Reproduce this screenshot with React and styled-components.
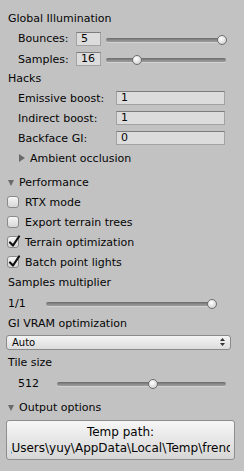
import React from "react";
import styled, { createGlobalStyle } from "styled-components";

const Global = createGlobalStyle`
  html, body { margin: 0; padding: 0; background: #c2c2c2; }
  body { font-family: "DejaVu Sans", "Liberation Sans", sans-serif; font-size: 11px; color: #050505; }
`;

const Panel = styled.div`
  width: 244px;
  height: 471px;
  box-sizing: border-box;
  padding-top: 8px;
  display: flex;
  flex-direction: column;
  overflow: hidden;
  background: #c2c2c2;
`;

const Row = styled.div`
  display: flex;
  align-items: center;
  flex: none;
  box-sizing: border-box;
  height: ${(p) => p.$h || 20}px;
  padding-left: ${(p) => (p.$left ?? 8)}px;
  padding-right: ${(p) => p.$right || 0}px;
  margin-top: ${(p) => p.$mt || 0}px;
  white-space: nowrap;
`;

const Label = styled.span`
  flex: none;
  width: ${(p) => (p.$w ? `${p.$w}px` : "auto")};
  line-height: 13px;
`;

const Field = styled.div`
  flex: none;
  box-sizing: border-box;
  width: ${(p) => p.$w}px;
  height: 14px;
  background: #dcdcdc;
  border: 1px solid #a2a2a2;
  border-top-color: #7c7c7c;
  padding-left: 4px;
  font-size: 11px;
  line-height: 12px;
`;

const SliderWrap = styled.div`
  position: relative;
  flex: 1;
  height: 12px;
  margin-left: ${(p) => p.$ml || 0}px;
  margin-top: 2px;
  display: flex;
  align-items: center;
`;

const Track = styled.div`
  width: 100%;
  height: 4px;
  border-radius: 2px;
  background: linear-gradient(#6a6a6a, #8e8e8e 60%, #9c9c9c);
  box-shadow: 0 1px 0 #d2d2d2;
`;

const Knob = styled.div`
  position: absolute;
  top: 1px;
  width: 10px;
  height: 10px;
  margin-left: -5px;
  box-sizing: border-box;
  border-radius: 50%;
  border: 1px solid #6e6e6e;
  background: radial-gradient(circle at 40% 35%, #ffffff, #e6e6e6 45%, #c4c4c4);
`;

const Slider = ({ value, ml }) => (
  <SliderWrap $ml={ml}>
    <Track />
    <Knob style={{ left: `calc(4px + (100% - 8px) * ${value})` }} />
  </SliderWrap>
);

const Foldout = styled.span`
  flex: none;
  display: inline-block;
  width: 0;
  height: 0;
  margin-right: ${(p) => p.$gap}px;
  ${(p) =>
    p.$open
      ? `border-left: 3.5px solid transparent; border-right: 3.5px solid transparent; border-top: 6px solid #6a6a6a; margin-top: 1px;`
      : `border-top: 4px solid transparent; border-bottom: 4px solid transparent; border-left: 6px solid #6a6a6a;`}
`;

const Box = styled.span`
  position: relative;
  flex: none;
  box-sizing: border-box;
  width: 12px;
  height: 12px;
  margin-right: 6px;
  border-radius: 3px;
  border: 1px solid #8a8a8a;
  background: linear-gradient(#f6f6f6, #d6d6d6);
`;

const Check = styled.svg`
  position: absolute;
  left: 0px;
  top: -2px;
`;

const CheckBox = ({ checked, children }) => (
  <Row $left={7}>
    <Box>
      {checked && (
        <Check width="13" height="13" viewBox="0 0 13 13">
          <path d="M2 7.5 L5 10.5 L11 1.5" fill="none" stroke="#111" strokeWidth="2.2" strokeLinecap="round" strokeLinejoin="round" />
        </Check>
      )}
    </Box>
    <Label>{children}</Label>
  </Row>
);

const Popup = styled.div`
  flex: none;
  box-sizing: border-box;
  width: 225px;
  height: 15px;
  border: 1px solid #8a8a8a;
  border-radius: 3px;
  background: linear-gradient(#f4f4f4, #dcdcdc);
  display: flex;
  align-items: center;
  justify-content: space-between;
  padding: 0 5px 0 5px;
  font-size: 10px;
`;

const Button = styled.div`
  flex: none;
  box-sizing: border-box;
  width: 229px;
  height: 40px;
  margin-left: 6px;
  margin-top: 2px;
  border: 1px solid #8e8e8e;
  border-radius: 3px;
  background: linear-gradient(#f6f6f6, #d6d6d6);
  padding: 0 4px;
  display: flex;
`;

const Clip = styled.div`
  flex: 1;
  overflow: hidden;
  display: flex;
  flex-direction: column;
  align-items: center;
  justify-content: center;
  font-size: 12px;
  line-height: 16px;
`;

const Line = styled.span`
  white-space: nowrap;
`;

export default function App() {
  return (
    <>
      <Global />
      <Panel>
        <Row>
          <Label>Global Illumination</Label>
        </Row>
        <Row $left={18} $right={18} $h={21}>
          <Label $w={58}>Bounces:</Label>
          <Field $w={25}>5</Field>
          <Slider value={1} ml={5} />
        </Row>
        <Row $left={18} $right={18}>
          <Label $w={58}>Samples:</Label>
          <Field $w={25}>16</Field>
          <Slider value={0.24} ml={5} />
        </Row>
        <Row $h={19}>
          <Label>Hacks</Label>
        </Row>
        <Row $left={18} $right={19}>
          <Label $w={98}>Emissive boost:</Label>
          <Field $w={109}>1</Field>
        </Row>
        <Row $left={18} $right={19}>
          <Label $w={98}>Indirect boost:</Label>
          <Field $w={109}>1</Field>
        </Row>
        <Row $left={18} $right={19}>
          <Label $w={98}>Backface GI:</Label>
          <Field $w={109}>0</Field>
        </Row>
        <Row $left={19}>
          <Foldout $gap={5} />
          <Label>Ambient occlusion</Label>
        </Row>
        <Row $mt={4} $left={8}>
          <Foldout $open $gap={5} />
          <Label>Performance</Label>
        </Row>
        <CheckBox>RTX mode</CheckBox>
        <CheckBox>Export terrain trees</CheckBox>
        <CheckBox checked>Terrain optimization</CheckBox>
        <CheckBox checked>Batch point lights</CheckBox>
        <Row>
          <Label>Samples multiplier</Label>
        </Row>
        <Row $h={22} $right={28}>
          <Label $w={38}>1/1</Label>
          <Slider value={1} />
        </Row>
        <Row $h={18}>
          <Label>GI VRAM optimization</Label>
        </Row>
        <Row $left={6}>
          <Popup>
            <span>Auto</span>
            <svg width="5" height="8" viewBox="0 0 5 8">
              <path d="M0 3 L2.5 0 L5 3 Z M0 5 L2.5 8 L5 5 Z" fill="#333" />
            </svg>
          </Popup>
        </Row>
        <Row>
          <Label>Tile size</Label>
        </Row>
        <Row $h={22} $left={18} $right={18}>
          <Label $w={39}>512</Label>
          <Slider value={0.57} />
        </Row>
        <Row $h={22} $mt={2}>
          <Foldout $open $gap={5} />
          <Label>Output options</Label>
        </Row>
        <Button>
          <Clip>
            <Line>Temp path:</Line>
            <Line>C:\Users\yuy\AppData\Local\Temp\frender</Line>
          </Clip>
        </Button>
      </Panel>
    </>
  );
}
